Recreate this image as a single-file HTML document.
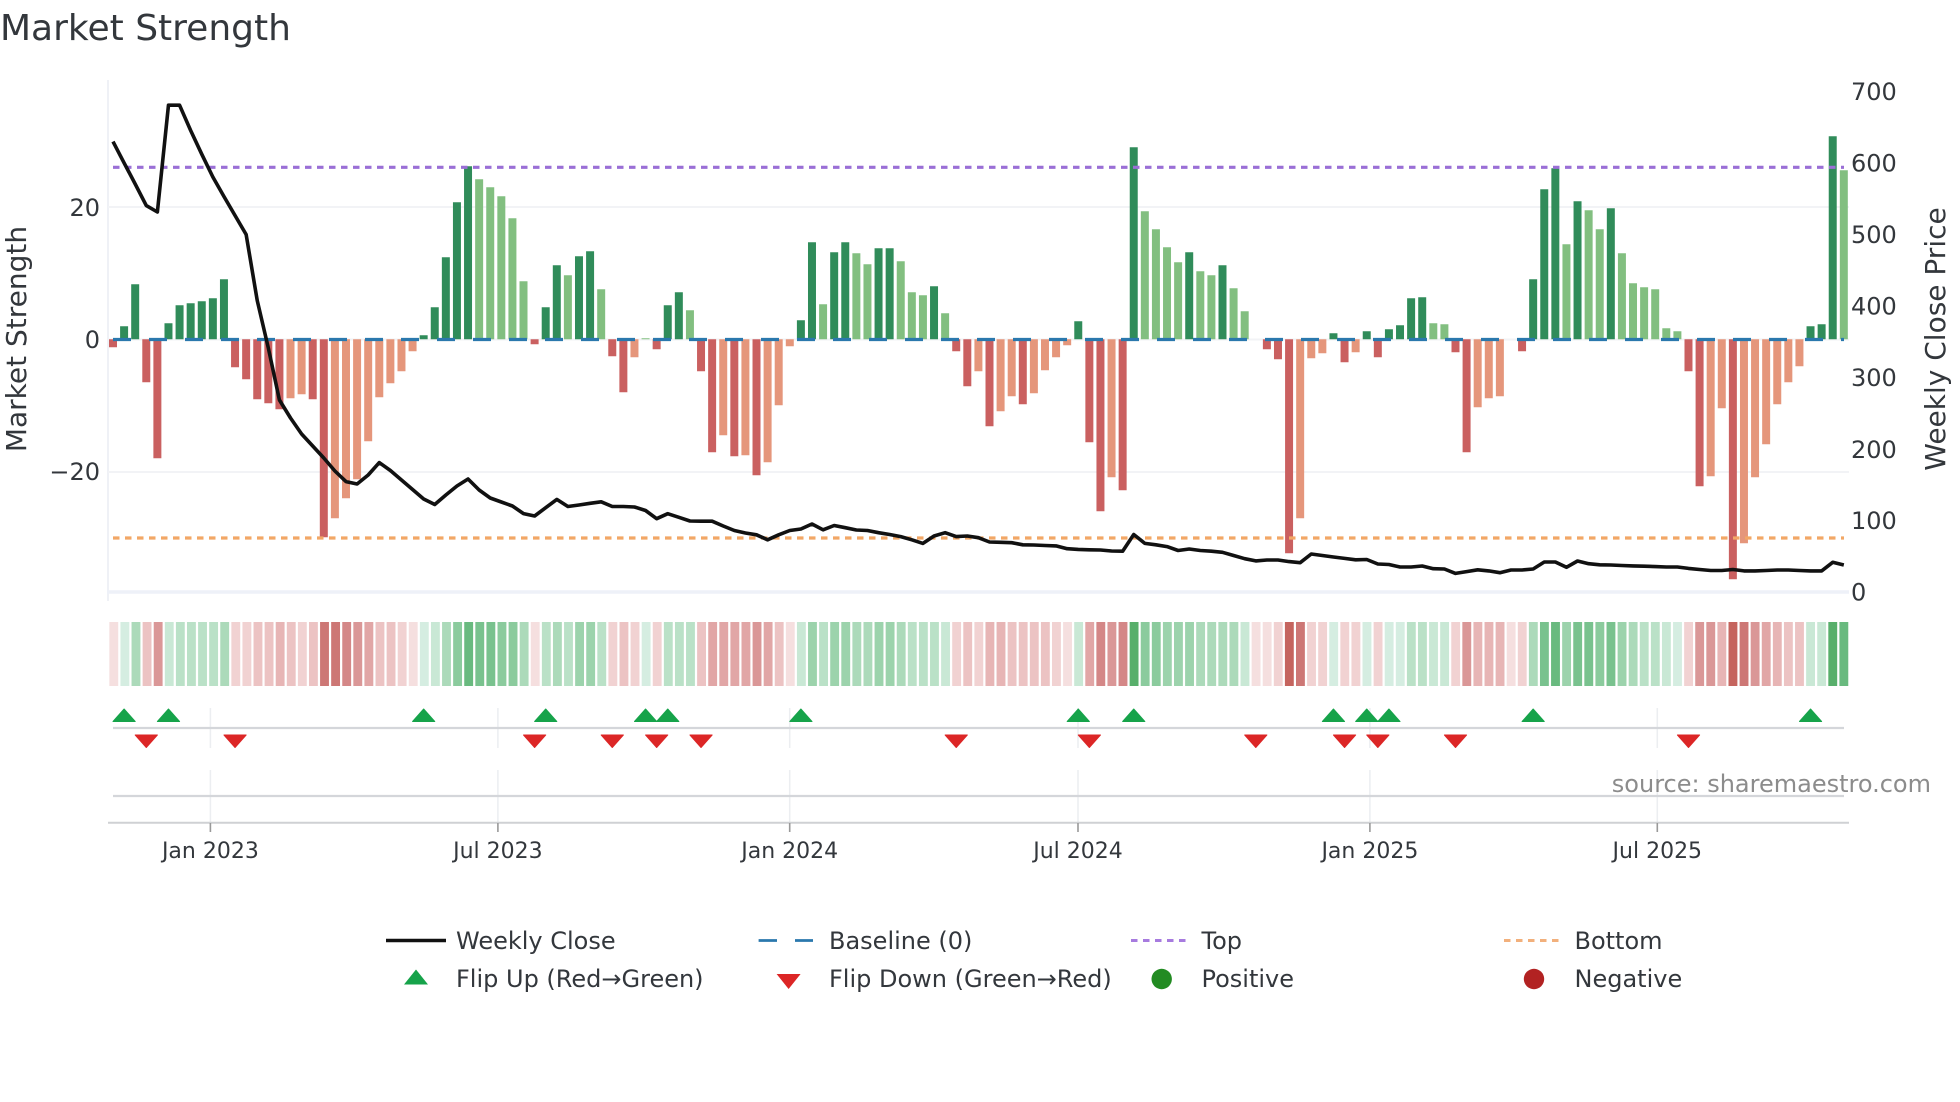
<!DOCTYPE html>
<html lang="en">
<head>
<meta charset="utf-8">
<title>Market Strength</title>
<style>
html,body{margin:0;padding:0;background:#fff}
svg{display:block}
text{font-family:"DejaVu Sans","Liberation Sans",sans-serif;fill:#33373c}
.t{font-size:24px}
.x{font-size:22px;text-anchor:middle}
.l{font-size:24px}
</style>
</head>
<body>
<svg xmlns="http://www.w3.org/2000/svg" width="1960" height="1102" viewBox="0 0 1960 1102">
<rect width="1960" height="1102" fill="#fff"/>
<text x="0" y="40" style="font-size:36px">Market Strength</text>

<!-- main panel grid -->
<g fill="none">
<path d="M108 80V601" stroke="#eff1f6" stroke-width="2"/>
<path d="M108 207H1849M108 472H1849M108 339.5H1849" stroke="#f2f3f6" stroke-width="2"/>
<path d="M107 592H1849" stroke="#eef1f8" stroke-width="3.5"/>
</g>

<!-- bars -->
<g transform="translate(113,339.3) scale(11.095,1)" fill="none" stroke-width=".72">
<path stroke="#308c5a" d="M1 0v-13M2 0v-55M5 0v-16M6 0v-34M7 0v-36M8 0v-38M9 0v-41M10 0v-60M28 0v-4M29 0v-32M30 0v-82M31 0v-137M32 0v-173M39 0v-32M40 0v-74M42 0v-83M43 0v-88M50 0v-34M51 0v-47M62 0v-19M63 0v-97M65 0v-87M66 0v-97M69 0v-91M70 0v-91M74 0v-53M87 0v-18M92 0v-192M97 0v-87M100 0v-74M110 0v-6M113 0v-8M115 0v-10M116 0v-14M117 0v-41M118 0v-42M128 0v-60M129 0v-150M130 0v-171M132 0v-138M135 0v-131M153 0v-13M154 0v-15M155 0v-203"/>
<path stroke="#82bf80" d="M33 0v-160M34 0v-152M35 0v-143M36 0v-121M37 0v-58M41 0v-64M44 0v-50M48 0v-1M52 0v-29M64 0v-35M67 0v-86M68 0v-75M71 0v-78M72 0v-47M73 0v-44M75 0v-26M93 0v-128M94 0v-110M95 0v-92M96 0v-77M98 0v-68M99 0v-64M101 0v-51M102 0v-28M119 0v-16M120 0v-15M131 0v-95M133 0v-129M134 0v-110M136 0v-86M137 0v-56M138 0v-52M139 0v-50M140 0v-11M141 0v-8M156 0v-169"/>
<path stroke="#ca6060" d="M0 0v8M3 0v43M4 0v119M11 0v28M12 0v40M13 0v60M14 0v64M15 0v70M18 0v60M19 0v198M38 0v5M45 0v17M46 0v53M49 0v10M53 0v32M54 0v113M56 0v117M58 0v136M76 0v12M77 0v47M79 0v87M82 0v65M88 0v103M89 0v172M91 0v151M104 0v10M105 0v20M106 0v214M111 0v23M114 0v18M121 0v13M122 0v113M127 0v12M142 0v32M143 0v147M146 0v240"/>
<path stroke="#e5967b" d="M16 0v59M17 0v55M20 0v179M21 0v159M22 0v140M23 0v102M24 0v58M25 0v44M26 0v32M27 0v12M47 0v18M55 0v96M57 0v116M59 0v123M60 0v66M61 0v7M78 0v32M80 0v72M81 0v57M83 0v54M84 0v31M85 0v18M86 0v6M90 0v138M107 0v179M108 0v19M109 0v14M112 0v13M123 0v68M124 0v59M125 0v57M144 0v137M145 0v69M147 0v204M148 0v138M149 0v105M150 0v65M151 0v43M152 0v27"/>
</g>

<!-- reference lines -->
<g fill="none" stroke-width="3.2">
<path d="M113 339.5H1844" stroke="#2a78ad" stroke-dasharray="18 18"/>
<path d="M113 167.3H1844" stroke="#9a6fd6" stroke-dasharray="6.5 5.5"/>
<path d="M113 538H1844" stroke="#f2a766" stroke-dasharray="6.5 5.5"/>
</g>

<!-- weekly close -->
<g transform="translate(113,0) scale(11.095,1)" fill="none">
<path vector-effect="non-scaling-stroke" stroke="#111" stroke-width="3.6" stroke-linejoin="round" d="M0 141.6L1 162.9L2 184L3 205.6L4 212L5 105.2L6 105.2L7 130.5L8 154.2L9 177L10 196.5L11 215.5L12 234.5L13 300.5L14 348L15 400L16 418L17 434L18 446L19 458L20 471L21 481.6L22 484L23 475L24 462.6L25 470.5L26 480L27 489.5L28 499L29 504.5L30 495L31 486L32 479L33 490L34 498L35 502L36 506L37 513.6L38 516L39 507.7L40 499.4L41 506.5L42 505L43 503.3L44 501.8L45 506.5L46 506.5L47 507L48 510.5L49 518.7L50 513.7L51 517.3L52 521L53 521.2L54 521.2L55 526L56 530.5L57 533L58 534.8L59 539.8L60 534.8L61 530.5L62 529L63 524L64 529.8L65 525.5L66 527.7L67 530L68 530.5L69 532.7L70 534.5L71 536.6L72 539.8L73 543.4L74 536L75 532.7L76 536.6L77 536L78 537.7L79 542L80 542.3L81 542.7L82 544.8L83 545L84 545.5L85 545.9L86 548.7L87 549.4L88 549.8L89 550L90 551L91 551.2L92 534.5L93 543.4L94 544.8L95 546.6L96 550.5L97 549L98 550.5L99 551.2L100 552.3L101 555.5L102 558.7L103 560.9L104 560L105 560L106 561.6L107 562.7L108 554L109 555.5L110 557L111 558.4L112 559.8L113 559.5L114 564L115 564.5L116 567L117 567L118 566L119 568.7L120 569L121 573.4L122 571.6L123 569.8L124 570.9L125 572.7L126 570L127 570L128 569L129 562L130 562L131 567.3L132 561L133 563.7L134 564.8L135 565L136 565.5L137 565.9L138 566.2L139 566.6L140 567L141 567L142 568.4L143 569.5L144 570.5L145 570.5L146 569.5L147 570.9L148 570.9L149 570.5L150 570L151 570L152 570.5L153 570.9L154 570.9L155 562.3L156 565"/>
</g>

<!-- heat strip -->
<g transform="translate(113.8,622) scale(11.09,1)" fill="none" stroke-width=".8">
<path stroke="#f5dfdf" d="M0 0v64M27 0v64M38 0v64M61 0v64M86 0v64M103 0v64M104 0v64M126 0v64"/>
<path stroke="#f1d2d2" d="M11 0v64M12 0v64M17 0v64M26 0v64M45 0v64M47 0v64M49 0v64M76 0v64M78 0v64M85 0v64M105 0v64M108 0v64M109 0v64M111 0v64M112 0v64M114 0v64M121 0v64M127 0v64M142 0v64"/>
<path stroke="#ecc3c3" d="M3 0v64M13 0v64M14 0v64M16 0v64M18 0v64M24 0v64M25 0v64M46 0v64M53 0v64M60 0v64M77 0v64M81 0v64M82 0v64M83 0v64M84 0v64M151 0v64M152 0v64"/>
<path stroke="#e7b5b5" d="M15 0v64M79 0v64M80 0v64M123 0v64M124 0v64M125 0v64M145 0v64M150 0v64"/>
<path stroke="#e1a6a6" d="M23 0v64M54 0v64M55 0v64M56 0v64M57 0v64M59 0v64M88 0v64M149 0v64"/>
<path stroke="#da9797" d="M4 0v64M22 0v64M58 0v64M90 0v64M122 0v64M143 0v64M144 0v64M148 0v64"/>
<path stroke="#d48787" d="M21 0v64M89 0v64M91 0v64"/>
<path stroke="#cd7775" d="M19 0v64M20 0v64M107 0v64M147 0v64"/>
<path stroke="#c5645e" d="M106 0v64M146 0v64"/>
<path stroke="#d5ede1" d="M1 0v64M28 0v64M48 0v64M110 0v64M113 0v64M115 0v64M116 0v64M141 0v64"/>
<path stroke="#c9e8d5" d="M5 0v64M29 0v64M62 0v64M75 0v64M87 0v64M102 0v64M119 0v64M120 0v64M140 0v64M153 0v64M154 0v64"/>
<path stroke="#bae1c7" d="M6 0v64M7 0v64M8 0v64M9 0v64M39 0v64M41 0v64M44 0v64M50 0v64M51 0v64M52 0v64M64 0v64M72 0v64M73 0v64M74 0v64M117 0v64M118 0v64M138 0v64M139 0v64"/>
<path stroke="#acdaba" d="M2 0v64M10 0v64M30 0v64M37 0v64M40 0v64M67 0v64M68 0v64M71 0v64M98 0v64M99 0v64M100 0v64M101 0v64M128 0v64M137 0v64"/>
<path stroke="#9cd3ac" d="M42 0v64M43 0v64M63 0v64M65 0v64M66 0v64M69 0v64M70 0v64M95 0v64M96 0v64M97 0v64M131 0v64M136 0v64"/>
<path stroke="#8bcb9d" d="M31 0v64M35 0v64M36 0v64M93 0v64M94 0v64M134 0v64"/>
<path stroke="#79c28e" d="M33 0v64M34 0v64M129 0v64M132 0v64M133 0v64M135 0v64"/>
<path stroke="#69ba7f" d="M32 0v64M130 0v64M156 0v64"/>
<path stroke="#58af6b" d="M92 0v64M155 0v64"/>
</g>

<!-- lower panels -->
<g fill="none">
<path d="M210.4 708V748M210.4 770V823M497.9 708V748M497.9 770V823M789.7 708V748M789.7 770V823M1078 708V748M1078 770V823M1369.9 708V748M1369.9 770V823M1657.3 708V748M1657.3 770V823" stroke="#eceef1" stroke-width="1.5"/>
<path d="M113 728H1844M113 796H1844" stroke="#d4d6da" stroke-width="2.2"/>
<path d="M108 822.7H1849" stroke="#cfd1d4" stroke-width="2"/>
<path d="M210.4 823V832M497.9 823V832M789.7 823V832M1078 823V832M1369.9 823V832M1657.3 823V832" stroke="#999" stroke-width="1.6"/>
</g>

<!-- flip markers -->
<g transform="translate(113,0) scale(11.095,1)">
<path fill="#16a34a" stroke="#16a34a" stroke-linejoin="round" vector-effect="non-scaling-stroke" stroke-width="1" d="M1 709l1 12.5h-2zM5 709l1 12.5h-2zM28 709l1 12.5h-2zM39 709l1 12.5h-2zM48 709l1 12.5h-2zM50 709l1 12.5h-2zM62 709l1 12.5h-2zM87 709l1 12.5h-2zM92 709l1 12.5h-2zM110 709l1 12.5h-2zM113 709l1 12.5h-2zM115 709l1 12.5h-2zM128 709l1 12.5h-2zM153 709l1 12.5h-2z"/>
<path fill="#dc2626" stroke="#dc2626" stroke-linejoin="round" vector-effect="non-scaling-stroke" stroke-width="1" d="M3 747.5l1 -12.5h-2zM11 747.5l1 -12.5h-2zM38 747.5l1 -12.5h-2zM45 747.5l1 -12.5h-2zM49 747.5l1 -12.5h-2zM53 747.5l1 -12.5h-2zM76 747.5l1 -12.5h-2zM88 747.5l1 -12.5h-2zM103 747.5l1 -12.5h-2zM111 747.5l1 -12.5h-2zM114 747.5l1 -12.5h-2zM121 747.5l1 -12.5h-2zM142 747.5l1 -12.5h-2z"/>
</g>

<!-- axis labels -->
<g>
<text class="t" x="100" y="216" text-anchor="end">20</text>
<text class="t" x="100" y="348" text-anchor="end">0</text>
<text class="t" x="100" y="480" text-anchor="end">−20</text>
</g>
<g>
<text class="t" x="1851" y="100">700</text>
<text class="t" x="1851" y="171.5">600</text>
<text class="t" x="1851" y="243">500</text>
<text class="t" x="1851" y="314.7">400</text>
<text class="t" x="1851" y="386">300</text>
<text class="t" x="1851" y="458">200</text>
<text class="t" x="1851" y="529">100</text>
<text class="t" x="1851" y="600.7">0</text>
</g>
<text transform="translate(26,339) rotate(-90)" text-anchor="middle" style="font-size:28px">Market Strength</text>
<text transform="translate(1945,339) rotate(-90)" text-anchor="middle" style="font-size:28px">Weekly Close Price</text>

<text class="x" x="210.4" y="858">Jan 2023</text>
<text class="x" x="497.9" y="858">Jul 2023</text>
<text class="x" x="789.7" y="858">Jan 2024</text>
<text class="x" x="1078" y="858">Jul 2024</text>
<text class="x" x="1369.9" y="858">Jan 2025</text>
<text class="x" x="1657.3" y="858">Jul 2025</text>

<text x="1931" y="792" text-anchor="end" style="font-size:24px;fill:#8c8c8c">source: sharemaestro.com</text>

<!-- legend -->
<g fill="none">
<path d="M386 940.5H446" stroke="#111" stroke-width="3.4"/>
<path d="M758.6 940.5H777M795 940.5H813" stroke="#2a78ad" stroke-width="2.8"/>
<path d="M1131 940.5H1187" stroke="#a77bdf" stroke-width="3" stroke-dasharray="6.5 5.5"/>
<path d="M1504 940.5H1559" stroke="#f2b07c" stroke-width="3" stroke-dasharray="6.5 5.5"/>
</g>
<path d="M416 969.5l12 15h-24z" fill="#16a34a"/>
<path d="M788.6 989l12 -15h-24z" fill="#dc2626"/>
<circle cx="1161.7" cy="979" r="10.2" fill="#228b22"/>
<circle cx="1534" cy="979" r="10.2" fill="#b22222"/>
<text class="l" x="456" y="949">Weekly Close</text>
<text class="l" x="829" y="949">Baseline (0)</text>
<text class="l" x="1201.5" y="949">Top</text>
<text class="l" x="1574.5" y="949">Bottom</text>
<text class="l" x="456" y="987">Flip Up (Red→Green)</text>
<text class="l" x="829" y="987">Flip Down (Green→Red)</text>
<text class="l" x="1201.5" y="987">Positive</text>
<text class="l" x="1574.5" y="987">Negative</text>
</svg>
</body>
</html>
